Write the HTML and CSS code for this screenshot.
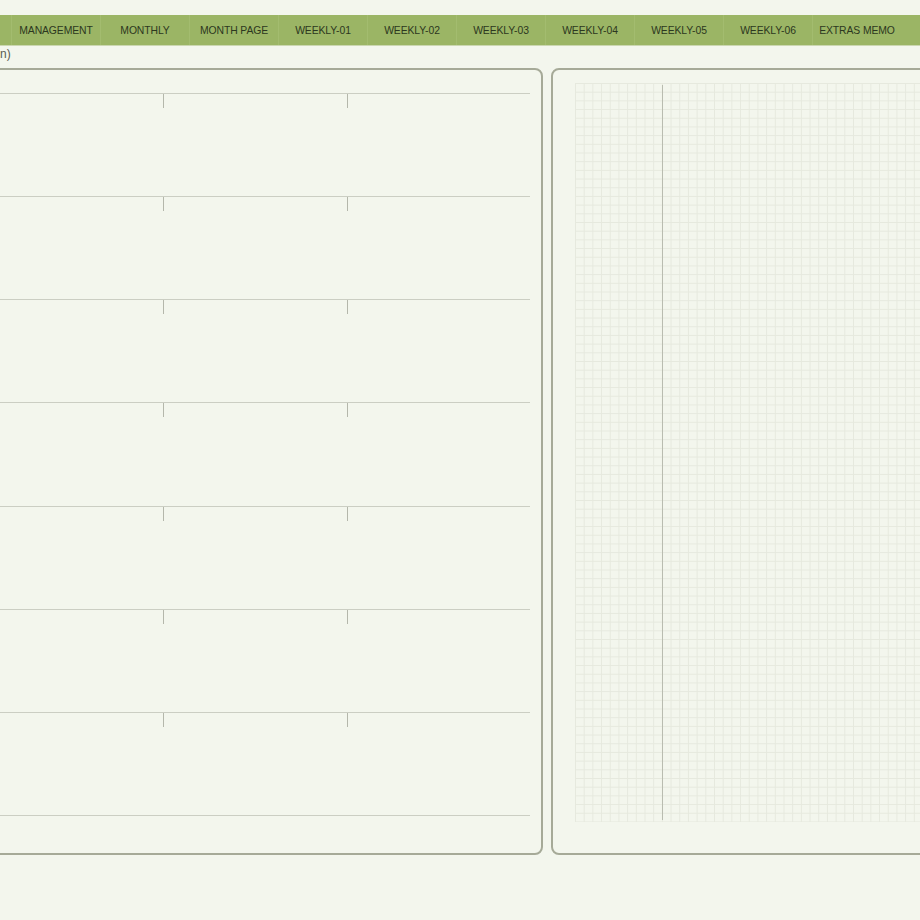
FILE: index.html
```html
<!DOCTYPE html>
<html lang="en">
<head>
<meta charset="UTF-8">
<meta name="viewport" content="width=device-width, initial-scale=1.0">
<title>Planner Spread</title>
<link rel="stylesheet" href="styles.css">
</head>
<body>
  <!-- Section tabs -->
  <nav class="tabs">
    <div class="tab">MANAGEMENT</div>
    <div class="tab">MONTHLY</div>
    <div class="tab">MONTH PAGE</div>
    <div class="tab">WEEKLY-01</div>
    <div class="tab">WEEKLY-02</div>
    <div class="tab">WEEKLY-03</div>
    <div class="tab">WEEKLY-04</div>
    <div class="tab">WEEKLY-05</div>
    <div class="tab">WEEKLY-06</div>
    <div class="tab">EXTRAS MEMO</div>
  </nav>

  <div class="note">n)</div>

  <div class="spread">
    <!-- Left page: ruled rows -->
    <section class="page page-left">
      <div class="row"><div class="cell"></div><div class="cell"><span class="mark"></span></div><div class="cell"><span class="mark"></span></div></div>
      <div class="row"><div class="cell"></div><div class="cell"><span class="mark"></span></div><div class="cell"><span class="mark"></span></div></div>
      <div class="row"><div class="cell"></div><div class="cell"><span class="mark"></span></div><div class="cell"><span class="mark"></span></div></div>
      <div class="row"><div class="cell"></div><div class="cell"><span class="mark"></span></div><div class="cell"><span class="mark"></span></div></div>
      <div class="row"><div class="cell"></div><div class="cell"><span class="mark"></span></div><div class="cell"><span class="mark"></span></div></div>
      <div class="row"><div class="cell"></div><div class="cell"><span class="mark"></span></div><div class="cell"><span class="mark"></span></div></div>
      <div class="row"><div class="cell"></div><div class="cell"><span class="mark"></span></div><div class="cell"><span class="mark"></span></div></div>
    </section>

    <!-- Right page: grid paper -->
    <section class="page page-right">
      <div class="grid">
        <div class="grid-margin"></div>
        <div class="grid-body"></div>
      </div>
    </section>
  </div>
</body>
</html>
```

FILE: styles.css
```css
body {
  margin: 0;
  background-color: #f3f6ed;
  font-family: "Liberation Sans", Arial, sans-serif;
  color: #2e3a20;
  overflow: hidden;
  width: 920px;
  height: 920px;
}

/* Tabs bar */
.tabs {
  display: flex;
  margin-top: 15px;
  height: 30px;
  padding-left: 11px;
  background-color: #9bb565;
  border-bottom: 1px solid #cbd7b1;
}

.tab {
  flex: 0 0 89px;
  display: flex;
  align-items: center;
  justify-content: center;
  font-size: 10.4px;
  letter-spacing: -0.1px;
  color: #2c3720;
  border-left: 1px solid #a3bc6f;
  box-sizing: border-box;
}

.note {
  height: 22px;
  font-size: 12px;
  line-height: 16px;
  color: #5a5d52;
}

/* Spread */
.spread {
  display: flex;
  gap: 8px;
  margin-left: -30px;
  margin-right: -30px;
}

.page {
  height: 787px;
  box-sizing: border-box;
  border: 2px solid #a6aa98;
  border-radius: 8px;
  background-color: #f3f6ed;
}

.page-left {
  flex: 0 0 573px;
  padding: 23px 11px 0 8px;
}

.row {
  display: grid;
  grid-template-columns: 1fr 1fr 1fr;
  height: 103.14px;
  box-sizing: border-box;
  border-top: 1.5px solid #cbcec3;
}

.row:last-child {
  height: 104.6px;
  border-bottom: 1.5px solid #cbcec3;
}

.mark {
  display: block;
  width: 1px;
  height: 14px;
  background-color: #b4b7ab;
}

.page-right {
  flex: 1;
  padding: 13px 0 31px 22px;
}

.grid {
  display: flex;
  height: 100%;
  background-color: #f3f6ed;
  background-image:
    linear-gradient(to right, #e6e9de 1px, transparent 1px),
    linear-gradient(to bottom, #e6e9de 1px, transparent 1px);
  background-size: 8.7px 8.7px;
}

.grid-margin {
  width: 87px;
  margin: 2px 0;
  border-right: 1.5px solid #b9bcb0;
}

.grid-body {
  flex: 1;
}
```
